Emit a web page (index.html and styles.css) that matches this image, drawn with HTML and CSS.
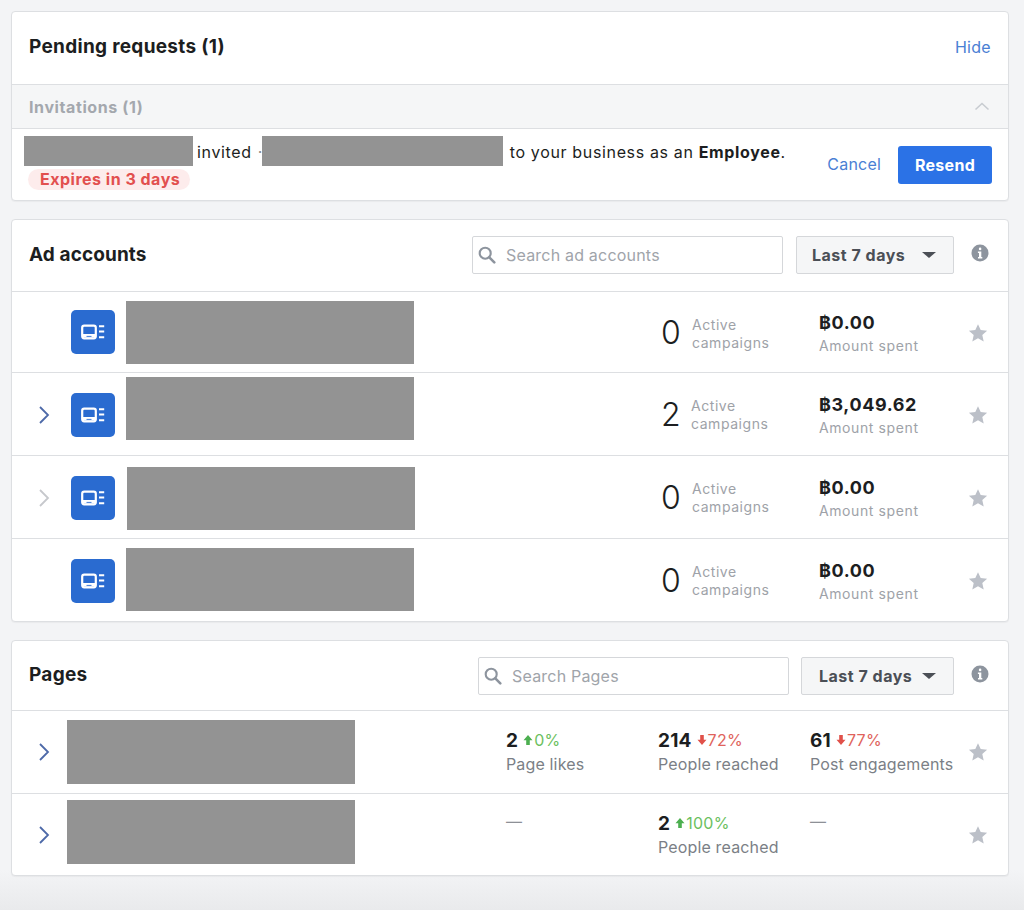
FILE: index.html
```html
<!DOCTYPE html>
<html lang="en">
<head>
<meta charset="utf-8">
<title>Business overview</title>
<link rel="stylesheet" href="styles.css">
</head>
<body>
<svg class="defs" aria-hidden="true">
  <symbol id="star" viewBox="0 0 20 20"><path d="M10 1.2l2.7 5.9 6.4.7-4.8 4.3 1.4 6.4L10 15.2l-5.7 3.3 1.4-6.4L.9 7.8l6.4-.7z" stroke-linejoin="round"/></symbol>
  <symbol id="chev" viewBox="0 0 12 20"><path d="M2 2l8 8-8 8" fill="none" stroke="currentColor" stroke-width="1.8"/></symbol>
  <symbol id="acct" viewBox="0 0 44 44"><rect width="44" height="44" rx="5" fill="#2a6bd0"/><rect x="11.2" y="15.7" width="13.6" height="12.6" rx="2" fill="none" stroke="#fff" stroke-width="2.2"/><rect x="12" y="24" width="12" height="3.5" fill="#fff"/><path d="M15.5 26.4h5" stroke="#2a6bd0" stroke-width=".9"/><path d="M28 16.2h5.2M28 21.6h5.2M28 27.2h5.2" stroke="#fff" stroke-width="2"/></symbol>
  <symbol id="search" viewBox="0 0 18 18"><circle cx="7.2" cy="7.2" r="5.5" fill="none" stroke="currentColor" stroke-width="2.1"/><path d="M11.3 11.3l5 5" stroke="currentColor" stroke-width="2.6" stroke-linecap="round"/></symbol>
  <symbol id="info" viewBox="0 0 18 18"><circle cx="9" cy="9" r="8.5" fill="#8d949e"/><rect x="7.8" y="3.6" width="2.6" height="2.6" rx="1.3" fill="#fff"/><path d="M6.9 7.6h3.4v5.4h1v1.4H7v-1.4h1V9H6.9z" fill="#fff"/></symbol>
  <symbol id="up" viewBox="0 0 10 12"><path d="M5 1l4.5 5.2H6.8V11H3.2V6.2H.5z"/></symbol>
  <symbol id="down" viewBox="0 0 10 12"><path d="M5 11L.5 5.8h2.7V1h3.6v4.8h2.7z"/></symbol>
</svg>

<main class="page">
  <section class="card pending">
    <header class="pending-head">
      <h2 class="title">Pending requests (1)</h2>
      <a class="link hide">Hide</a>
    </header>
    <div class="subhead">
      <span>Invitations (1)</span>
      <svg class="collapse" viewBox="0 0 16 9"><path d="M1.5 7.5L8 1.5l6.5 6" fill="none" stroke="currentColor" stroke-width="1.6"/></svg>
    </div>
    <div class="invite">
      <div class="invite-text">
        <p class="invite-line"><span class="redact r-inviter"></span><span class="w1">invited</span><span class="dot">·</span><span class="redact r-invitee"></span><span class="w2">to your business as an <b>Employee</b>.</span></p>
        <span class="expires">Expires in 3 days</span>
      </div>
      <div class="invite-actions">
        <a class="link cancel">Cancel</a>
        <button class="resend">Resend</button>
      </div>
    </div>
  </section>

  <section class="card accounts">
    <header class="toolbar acc-bar">
      <h2 class="title">Ad accounts</h2>
      <div class="tools">
        <label class="search"><svg class="ico-search"><use href="#search"/></svg><span>Search ad accounts</span></label>
        <button class="range">Last 7 days<i class="caret"></i></button>
        <svg class="ico-info"><use href="#info"/></svg>
      </div>
    </header>

    <div class="row acc first">
      <span class="chev none"></span>
      <svg class="acct"><use href="#acct"/></svg>
      <span class="redact name n1"></span>
      <div class="count"><span class="num">0</span><span class="lbl">Active<br>campaigns</span></div>
      <div class="spent"><b>฿0.00</b><span>Amount spent</span></div>
      <svg class="star"><use href="#star"/></svg>
    </div>
    <div class="row acc">
      <svg class="chev blue"><use href="#chev"/></svg>
      <svg class="acct"><use href="#acct"/></svg>
      <span class="redact name n2"></span>
      <div class="count c2"><span class="num">2</span><span class="lbl">Active<br>campaigns</span></div>
      <div class="spent"><b>฿3,049.62</b><span>Amount spent</span></div>
      <svg class="star"><use href="#star"/></svg>
    </div>
    <div class="row acc">
      <svg class="chev grey"><use href="#chev"/></svg>
      <svg class="acct"><use href="#acct"/></svg>
      <span class="redact name n3"></span>
      <div class="count"><span class="num">0</span><span class="lbl">Active<br>campaigns</span></div>
      <div class="spent"><b>฿0.00</b><span>Amount spent</span></div>
      <svg class="star"><use href="#star"/></svg>
    </div>
    <div class="row acc last">
      <span class="chev none"></span>
      <svg class="acct"><use href="#acct"/></svg>
      <span class="redact name n4"></span>
      <div class="count"><span class="num">0</span><span class="lbl">Active<br>campaigns</span></div>
      <div class="spent"><b>฿0.00</b><span>Amount spent</span></div>
      <svg class="star"><use href="#star"/></svg>
    </div>
  </section>

  <section class="card pages">
    <header class="toolbar pages-bar">
      <h2 class="title">Pages</h2>
      <div class="tools">
        <label class="search"><svg class="ico-search"><use href="#search"/></svg><span>Search Pages</span></label>
        <button class="range r-pages">Last 7 days<i class="caret"></i></button>
        <svg class="ico-info"><use href="#info"/></svg>
      </div>
    </header>

    <div class="row pg">
      <svg class="chev blue"><use href="#chev"/></svg>
      <span class="redact name p1"></span>
      <div class="metric m1"><div class="mv"><b>2</b><svg class="arrow good"><use href="#up"/></svg><span class="good">0%</span></div><span class="ml">Page likes</span></div>
      <div class="metric m2"><div class="mv"><b>214</b><svg class="arrow bad"><use href="#down"/></svg><span class="bad">72%</span></div><span class="ml">People reached</span></div>
      <div class="metric m3"><div class="mv"><b>61</b><svg class="arrow bad"><use href="#down"/></svg><span class="bad">77%</span></div><span class="ml">Post engagements</span></div>
      <svg class="star"><use href="#star"/></svg>
    </div>
    <div class="row pg">
      <svg class="chev blue"><use href="#chev"/></svg>
      <span class="redact name p2"></span>
      <div class="metric m1"><div class="dash">—</div></div>
      <div class="metric m2"><div class="mv"><b>2</b><svg class="arrow good"><use href="#up"/></svg><span class="good">100%</span></div><span class="ml">People reached</span></div>
      <div class="metric m3"><div class="dash">—</div></div>
      <svg class="star"><use href="#star"/></svg>
    </div>
  </section>
</main>
</body>
</html>
```
FILE: styles.css
```css
* { box-sizing: border-box; }
html, body { margin: 0; height: 910px; overflow: hidden; }
body {
  background: linear-gradient(#f3f4f6 0, #f3f4f6 870px, #e9eaec 910px);
  font-family: "Inter", "Liberation Sans", sans-serif;
  color: #1c1e21;
  letter-spacing: .3px;
}
.defs { display: none; }
.page { width: 998px; margin-left: 11px; padding-top: 11px; display: flex; flex-direction: column; gap: 18px; }
.card { background: #fff; border: 1px solid #dddfe2; border-radius: 4px; box-shadow: 0 1px 1px rgba(0,0,0,.04); }
.title { margin: 0 0 3px; font-size: 19px; line-height: 22px; font-weight: 700; color: #1c1e21; letter-spacing: .3px; }
.acc-bar .title { margin-bottom: 0; letter-spacing: .1px; }
.pages-bar .title { margin-bottom: 1px; }
.link { color: #4a80d4; font-size: 16px; }
.redact { display: block; background: #939393; flex: none; }

.pending { height: 190px; }
.pending-head { height: 73px; padding: 0 17px; display: flex; justify-content: space-between; align-items: center; border-bottom: 1px solid #dddfe2; }
.hide { padding-bottom: 3px; }
.subhead { height: 44px; padding: 0 18px 0 17px; display: flex; justify-content: space-between; align-items: center; background: #f5f6f7; border-bottom: 1px solid #dddfe2; color: #a4a8ae; font-size: 16px; font-weight: 700; letter-spacing: .6px; }
.collapse { width: 16px; height: 9px; color: #c8ccd1; }
.invite { height: 71px; display: flex; justify-content: space-between; padding: 7px 16px 0 12px; }
.invite-text { display: flex; flex-direction: column; }
.invite-line { margin: 0; display: flex; align-items: center; font-size: 16px; color: #1c1e21; height: 30px; letter-spacing: .65px; }
.invite-line span:not(.redact) { position: relative; top: 1px; }
.r-inviter { width: 169px; height: 30px; }
.r-invitee { width: 241px; height: 30px; }
.w1 { margin-left: 4px; white-space: pre; }
.dot { margin-left: 6px; width: 4px; color: #888; }
.w2 { margin-left: 7px; white-space: pre; }
.expires { align-self: flex-start; margin: 3px 0 0 4px; padding: 0 10px 0 12px; height: 21px; line-height: 21px; border-radius: 11px; background: #fdecec; color: #e2504f; font-size: 16px; font-weight: 700; letter-spacing: .5px; }
.invite-actions { display: flex; align-items: flex-start; gap: 17px; padding-top: 10px; }
.cancel { line-height: 38px; letter-spacing: .2px; margin-top: -1px; }
.resend { width: 94px; height: 38px; border: 0; border-radius: 3px; background: #2b72e6; color: #fff; font: 700 16px "Inter", sans-serif; letter-spacing: .3px; padding: 0; }

.toolbar { height: 72px; padding: 0 19px 0 17px; display: flex; justify-content: space-between; align-items: center; border-bottom: 1px solid #dddfe2; }
.acc-bar { padding-bottom: 2px; }
.tools { display: flex; align-items: center; }
.search { display: flex; align-items: center; width: 311px; margin-right: 13px; height: 38px; border: 1px solid #d5d7da; border-radius: 2px; background: #fff; color: #a0a4aa; font-size: 16px; letter-spacing: .2px; padding-left: 5px; gap: 10px; }
.pages-bar .search { margin-right: 12px; }
.ico-search { width: 18px; height: 18px; color: #8d949e; }
.range { display: flex; align-items: center; justify-content: space-between; width: 158px; height: 38px; padding: 0 17px 0 15px; border: 1px solid #d5d7da; border-radius: 2px; background: #f5f6f7; color: #4b4f56; font: 700 16px "Inter", sans-serif; letter-spacing: .5px; margin-right: 17px; }
.r-pages { width: 153px; padding-left: 17px; }
.caret { width: 0; height: 0; border: 7px solid transparent; border-top: 6px solid #4b4f56; border-bottom: 0; }
.ico-info { width: 18px; height: 18px; margin-bottom: 3px; }

.row { position: relative; display: flex; align-items: center; border-bottom: 1px solid #dddfe2; }
.row:last-child { border-bottom: 0; }
.chev { display: block; flex: none; width: 12px; height: 20px; margin-left: 26px; }
.chev.blue { color: #4d69a8; }
.chev.grey { color: #c6c8cc; }
.acct { width: 44px; height: 44px; flex: none; margin-left: 21px; }
.star { width: 20px; height: 20px; fill: #bcc0c8; flex: none; position: absolute; right: 20px; }
.first .star { margin-top: 1px; }

.acc { height: 83px; padding-top: 2px; }
.acc.first { height: 81px; padding-top: 0; }
.acc.last { height: 82px; }
.name { width: 288px; height: 63px; }
.acc .name { margin-left: 11px; }
.n2 { margin-top: -13px; }
.acc .n3 { margin-left: 12px; }
.n4 { margin-top: -3px; }
.count { display: flex; align-items: center; position: absolute; top: 0; bottom: 0; left: 649px; }
.num { font-size: 32px; font-weight: 300; line-height: 36px; color: #1c1e21; width: 31px; letter-spacing: 0; position: relative; top: 1px; }
.c2 .num { width: 30px; }
.lbl { font-size: 14px; line-height: 18px; color: #9ea2a8; letter-spacing: .55px; position: relative; top: 1px; }
.first .lbl { top: 2px; }
.spent { display: flex; flex-direction: column; position: absolute; left: 807px; top: 4px; bottom: 0; justify-content: center; }
.spent b { font-size: 18px; line-height: 22px; font-weight: 700; color: #1c1e21; letter-spacing: .6px; }
.spent span { font-size: 14px; line-height: 22px; color: #9ea2a8; letter-spacing: .6px; position: relative; top: 1px; }

.pages-bar { height: 70px; }
.pg { height: 83px; }
.pg:last-child { height: 82px; }
.pages .name { height: 64px; margin-left: 17px; margin-top: -1px; }
.pages .p2 { margin-top: -6px; }
.pages { height: 236px; }
.metric { position: absolute; top: 17px; }
.m1 { left: 494px; }
.m2 { left: 646px; }
.m3 { left: 798px; }
.mv { display: flex; align-items: center; height: 24px; font-size: 16px; }
.mv b { font-size: 19px; font-weight: 700; letter-spacing: .2px; color: #1c1e21; margin-right: 5px; }
.ml { display: block; font-size: 16px; line-height: 24px; color: #7b7f86; letter-spacing: .15px; }
.arrow { width: 10px; height: 12px; margin-right: 1px; }
svg.good { fill: #4caf50; }
svg.bad { fill: #e0514a; }
span.good { color: #6cbf60; }
span.bad { color: #e0635c; }
.dash { color: #8d9096; font-size: 16px; line-height: 22px; margin-top: -1px; }
```
